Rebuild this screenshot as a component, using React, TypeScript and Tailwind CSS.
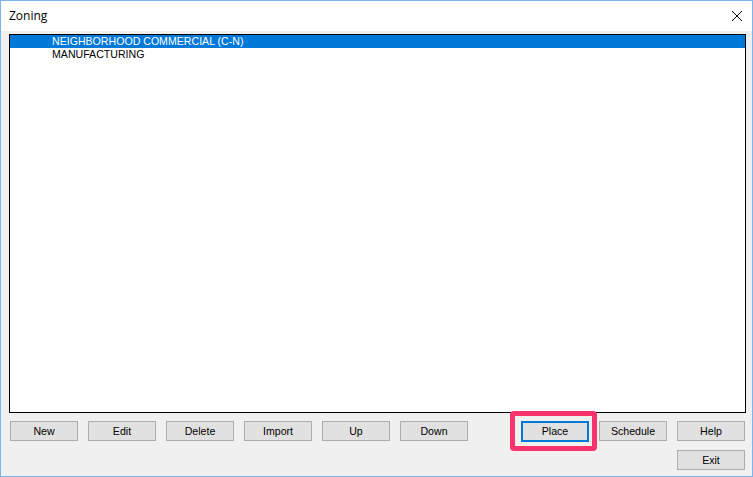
import React from "react";

const font = { fontFamily: '"Liberation Sans", Arial, sans-serif' };

const Btn = ({ label, primary = false }: { label: string; primary?: boolean }) => (
  <div
    className={
      primary
        ? "w-[68px] h-[21px] flex items-center justify-center bg-[#e1e1e1] border-2 border-[#0078d7] text-[10.6px] text-black leading-none"
        : "w-[68px] h-[20px] flex items-center justify-center bg-[#e1e1e1] border border-[#adadad] text-[10.6px] text-black leading-none"
    }
    style={font}
  >
    {label}
  </div>
);

export default function App() {
  return (
    <div className="w-[753px] h-[477px] border border-[#7ab5ee] flex flex-col bg-[#f0f0f0] overflow-hidden">
      <div className="h-[30px] bg-white flex items-center justify-between pl-[8px] pr-[9px]">
        <span
          className="text-[12px] text-black"
          style={{ fontFamily: '"Open Sans", "Noto Sans", sans-serif' }}
        >
          Zoning
        </span>
        <svg width="12" height="12" viewBox="0 0 12 12" className="mb-[1px]">
          <path d="M1 1 L11 11 M11 1 L1 11" stroke="#000" strokeWidth="1" />
        </svg>
      </div>
      <div className="flex-1 flex flex-col pt-[3px] pl-[8px] pr-[6px]">
        <div
          className="h-[379px] w-[737px] border border-[#000] bg-white flex flex-col text-[10.6px] leading-[13px]"
          style={font}
        >
          <div className="h-[13px] bg-[#0078d7] text-white pl-[42px]">NEIGHBORHOOD COMMERCIAL (C-N)</div>
          <div className="h-[13px] text-black pl-[42px]">MANUFACTURING</div>
        </div>
        <div className="flex mt-[8px] pl-[1px] items-start">
          <div className="flex gap-[10px]">
            <Btn label="New" />
            <Btn label="Edit" />
            <Btn label="Delete" />
            <Btn label="Import" />
            <Btn label="Up" />
            <Btn label="Down" />
          </div>
          <div className="flex gap-[10px] ml-[53px] items-start">
            <div className="relative">
              <div className="absolute left-[-11px] right-[-8px] top-[-10px] bottom-[-9px] border-[5px] border-[#f7336c] rounded-[4px]" />
              <Btn label="Place" primary />
            </div>
            <Btn label="Schedule" />
            <Btn label="Help" />
          </div>
        </div>
        <div className="flex justify-end mt-[8px] pr-[1px]">
          <Btn label="Exit" />
        </div>
      </div>
    </div>
  );
}
